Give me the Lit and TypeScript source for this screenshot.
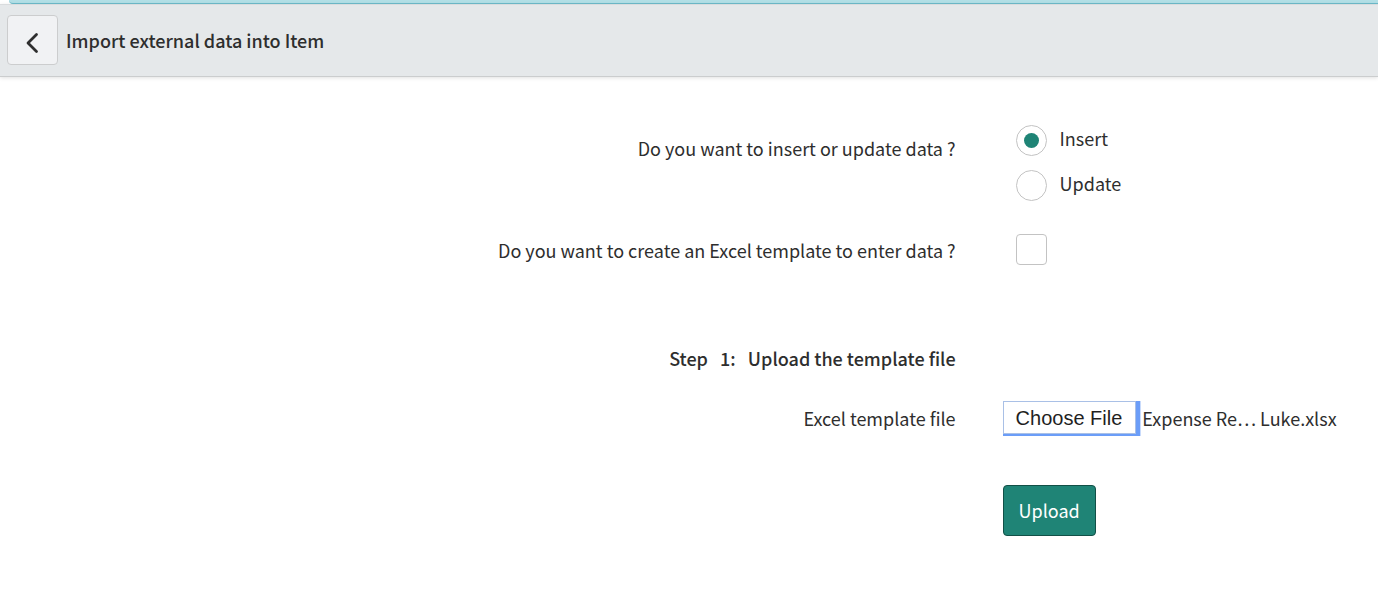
import { LitElement, html, css } from "lit";
import { customElement, state } from "lit/decorators.js";

@customElement("app-root")
export class AppRoot extends LitElement {
  static styles = css`
    :host {
      display: block;
      min-height: 100vh;
      background: #fff;
      color: #2e2e2e;
      font: 400 18px/26px "Noto Sans CJK SC", "Noto Sans", sans-serif;
    }
    *,
    *::before {
      box-sizing: border-box;
    }
    .strip {
      height: 4px;
      margin-left: 9px;
      background: #b2dfe6;
      border-bottom: 1px solid #6dbccb;
      border-bottom-left-radius: 4px;
    }
    .bar {
      display: flex;
      align-items: center;
      gap: 8px;
      height: 73px;
      padding: 0 7px 1px;
      background: #e5e8ea;
      border-top: 1px solid #d9dcde;
      border-bottom: 1px solid #cbcdce;
      box-shadow: 0 1px 4px rgba(0, 0, 0, 0.12);
    }
    .back {
      display: grid;
      place-items: center;
      width: 51px;
      height: 50px;
      padding: 5px 2px 0 0;
      background: #f1f2f4;
      border: 1px solid #cccdce;
      border-radius: 4px;
      color: #2e2e2e;
    }
    .title {
      margin: 0;
      font-size: 18px;
      font-weight: 500;
    }
    .form {
      display: grid;
      grid-template-columns: 28fr 11fr;
      column-gap: 47px;
      align-items: center;
      padding-top: 48px;
    }
    .label {
      text-align: right;
    }
    .mode-label {
      align-self: start;
      padding-top: 10px;
    }
    .heading {
      margin: 0;
      font-size: 18px;
      font-weight: 500;
      text-align: right;
      white-space: pre;
    }
    .options {
      display: grid;
      row-gap: 14px;
      padding-left: 13px;
    }
    .option {
      display: flex;
      align-items: flex-start;
      gap: 13px;
    }
    .radio,
    .check {
      appearance: none;
      display: grid;
      place-items: center;
      flex: none;
      width: 31px;
      height: 31px;
      margin: 0;
      background: #fff;
      border: 1px solid #c3c3c3;
    }
    .radio {
      border-radius: 50%;
    }
    .radio:checked::before {
      content: "";
      width: 15px;
      height: 15px;
      border-radius: 50%;
      background: #1f8476;
    }
    .check {
      border-radius: 4px;
    }
    .check:checked {
      background: #1f8476;
    }
    .template {
      margin-top: 33px;
    }
    .step {
      margin-top: 80px;
    }
    .file-row {
      margin-top: 30px;
    }
    .picker {
      position: relative;
      display: flex;
      align-items: center;
      white-space: nowrap;
    }
    .file-input {
      position: absolute;
      inset: 0;
      width: 100%;
      opacity: 0;
    }
    .choose {
      padding: 3px 13px 2px 12px;
      border: 1px solid #a9c0e6;
      box-shadow: 4px 0 0 #6b9df8, 4px 2px 0 #6b9df8, 0 2px 0 #6b9df8, 5px 0 0 #c9dbfb, 5px 2px 0 #c9dbfb;
      color: #1f1f1f;
      font: 400 20px/26px "Liberation Sans", Arial, sans-serif;
      margin-right: 6px;
    }
    .upload {
      height: 51px;
      padding: 0 15px 2px;
      margin-top: 51px;
      background: #1f8476;
      border: 1px solid #125047;
      border-radius: 4px;
      color: #fff;
      font: inherit;
    }
  `;

  @state() private mode = "insert";
  @state() private fileName = "Expense Re… Luke.xlsx";

  private pick(e: Event) {
    const file = (e.target as HTMLInputElement).files?.[0];
    if (file) this.fileName = file.name;
  }

  private option(value: string, text: string) {
    return html`<label class="option">
      <input
        class="radio"
        type="radio"
        name="mode"
        .checked=${this.mode === value}
        @change=${() => (this.mode = value)}
      />
      <span>${text}</span>
    </label>`;
  }

  render() {
    return html`
      <div class="strip"></div>
      <header class="bar">
        <button class="back" type="button" aria-label="Back">
          <svg width="14" height="22" viewBox="0 0 14 22" fill="none" aria-hidden="true">
            <path d="M11.5 2.5 3 11 11.5 19.5" stroke="currentColor" stroke-width="2.8" stroke-linecap="round" stroke-linejoin="round" />
          </svg>
        </button>
        <h1 class="title">Import external data into Item</h1>
      </header>
      <form class="form" @submit=${(e: Event) => e.preventDefault()}>
        <div class="label mode-label" id="mode-label">Do you want to insert or update data ?</div>
        <div class="options" role="radiogroup" aria-labelledby="mode-label">
          ${this.option("insert", "Insert")} ${this.option("update", "Update")}
        </div>

        <label class="label template" for="template">Do you want to create an Excel template to enter data ?</label>
        <div class="options template"><input class="check" id="template" type="checkbox" /></div>

        <h2 class="heading step">Step   1:   Upload the template file</h2>
        <div></div>

        <label class="label file-row" for="file">Excel template file</label>
        <div class="picker file-row">
          <span class="choose">Choose File</span>
          <span>${this.fileName}</span>
          <input class="file-input" id="file" type="file" accept=".xlsx" @change=${this.pick} />
        </div>

        <div></div>
        <div><button class="upload" type="submit">Upload</button></div>
      </form>
    `;
  }
}
